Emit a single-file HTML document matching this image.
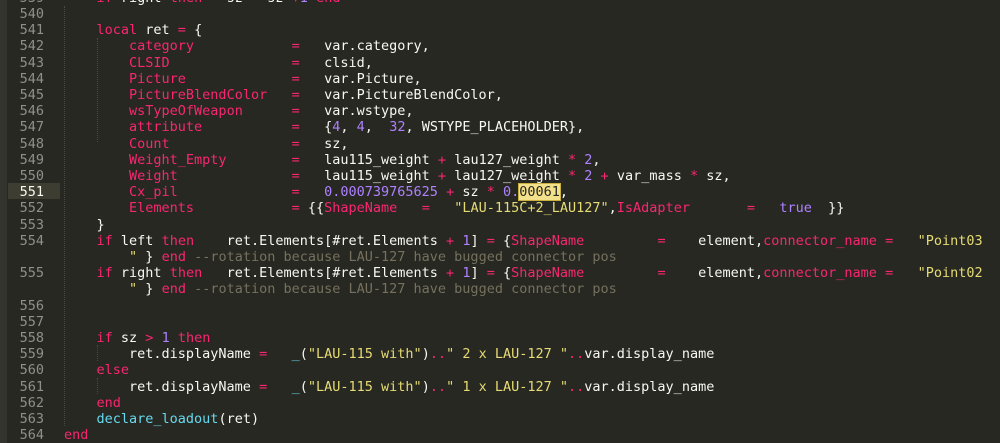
<!DOCTYPE html>
<html><head><meta charset="utf-8"><style>
html,body{margin:0;padding:0;background:#272822;width:1000px;height:443px;overflow:hidden}
.wrap{position:relative;width:1000px;height:443px}
.strip{position:absolute;left:0;top:0;width:7px;height:443px;background:#34342f}
.gut{position:absolute;left:0;top:-10.3px;width:44px;text-align:right;font:13.5px/16.2px "DejaVu Sans Mono",monospace;color:#8f908a;white-space:pre}
.hl{position:absolute;left:8px;width:52px;top:183px;height:16.2px;background:#3e3d32}
.code{position:absolute;left:64px;top:-10.3px;font:13.5px/16.2px "DejaVu Sans Mono",monospace;color:#f8f8f2;white-space:pre;margin:0}
.k{color:#f92672}.n{color:#ae81ff}.s{color:#e6db74}.c{color:#75715e}.f{color:#66d9ef}
.m{background:#f3e08a;color:#272822;outline:1px solid #c8b040}
.g{position:absolute;width:0;border-left:1px dotted #4a4a44}
</style></head><body><div class="wrap">
<div class="strip"></div>
<div class="hl"></div>
<div class="g" style="left:97px;top:38px;height:104px"></div>
<div class="g" style="left:97px;top:345px;height:16px"></div>
<div class="g" style="left:97px;top:378px;height:16px"></div>
<div class="g" style="left:64px;top:6px;height:420px"></div>
<div class="gut">539
540
541
542
543
544
545
546
547
548
549
550
<span style="color:#f8f8f2">551</span>
552
553
554

555

556
557
558
559
560
561
562
563
564</div>
<pre class="code">    <span class="k">if</span> right <span class="k">then</span>   sz <span class="k">=</span> sz <span class="k">+</span><span class="n">1</span> <span class="k">end</span>

    <span class="k">local</span> ret <span class="k">=</span> {
        <span class="k">category</span>            <span class="k">=</span>   var.category,
        <span class="k">CLSID</span>               <span class="k">=</span>   clsid,
        <span class="k">Picture</span>             <span class="k">=</span>   var.Picture,
        <span class="k">PictureBlendColor</span>   <span class="k">=</span>   var.PictureBlendColor,
        <span class="k">wsTypeOfWeapon</span>      <span class="k">=</span>   var.wstype,
        <span class="k">attribute</span>           <span class="k">=</span>   {<span class="n">4</span>, <span class="n">4</span>,  <span class="n">32</span>, WSTYPE_PLACEHOLDER},
        <span class="k">Count</span>               <span class="k">=</span>   sz,
        <span class="k">Weight_Empty</span>        <span class="k">=</span>   lau115_weight <span class="k">+</span> lau127_weight <span class="k">*</span> <span class="n">2</span>,
        <span class="k">Weight</span>              <span class="k">=</span>   lau115_weight <span class="k">+</span> lau127_weight <span class="k">*</span> <span class="n">2</span> <span class="k">+</span> var_mass <span class="k">*</span> sz,
        <span class="k">Cx_pil</span>              <span class="k">=</span>   <span class="n">0.000739765625</span> <span class="k">+</span> sz <span class="k">*</span> <span class="n">0.</span><span class="m">00061</span>,
        <span class="k">Elements</span>            <span class="k">=</span> {{<span class="k">ShapeName</span>   <span class="k">=</span>   <span class="s">"LAU-115C+2_LAU127"</span>,<span class="k">IsAdapter</span>       <span class="k">=</span>   <span class="n">true</span>  }}
    }
    <span class="k">if</span> left <span class="k">then</span>    ret.Elements[#ret.Elements <span class="k">+</span> <span class="n">1</span>] <span class="k">=</span> {<span class="k">ShapeName</span>         <span class="k">=</span>    element,<span class="k">connector_name</span> <span class="k">=</span>   <span class="s">"Point03</span>
        <span class="s">"</span> } <span class="k">end</span> <span class="c">--rotation because LAU-127 have bugged connector pos</span>
    <span class="k">if</span> right <span class="k">then</span>   ret.Elements[#ret.Elements <span class="k">+</span> <span class="n">1</span>] <span class="k">=</span> {<span class="k">ShapeName</span>         <span class="k">=</span>    element,<span class="k">connector_name</span> <span class="k">=</span>   <span class="s">"Point02</span>
        <span class="s">"</span> } <span class="k">end</span> <span class="c">--rotation because LAU-127 have bugged connector pos</span>


    <span class="k">if</span> sz <span class="k">&gt;</span> <span class="n">1</span> <span class="k">then</span>
        ret.displayName <span class="k">=</span>   <span class="f">_</span>(<span class="s">"LAU-115 with"</span>)<span class="k">..</span><span class="s">" 2 x LAU-127 "</span><span class="k">..</span>var.display_name
    <span class="k">else</span>
        ret.displayName <span class="k">=</span>   <span class="f">_</span>(<span class="s">"LAU-115 with"</span>)<span class="k">..</span><span class="s">" 1 x LAU-127 "</span><span class="k">..</span>var.display_name
    <span class="k">end</span>
    <span class="f">declare_loadout</span>(ret)
<span class="k">end</span></pre>
</div></body></html>
